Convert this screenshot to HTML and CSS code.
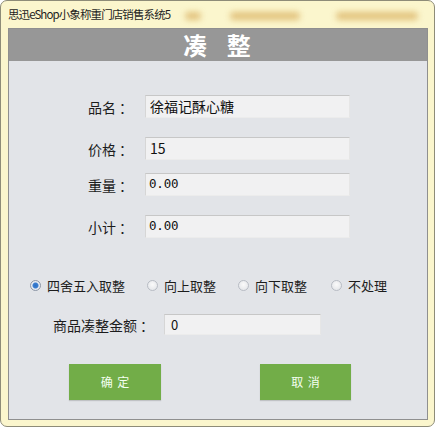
FILE: index.html
```html
<!DOCTYPE html>
<html lang="zh">
<head>
<meta charset="utf-8">
<link rel="stylesheet" href="styles.css">
</head>
<body>
<div class="window">
  <div class="titlebar">
    <span class="title">思迅eShop小象称重门店销售系统5</span>
    <span class="blob b1"></span>
    <span class="blob b2"></span>
    <span class="blob b3"></span>
  </div>
  <div class="client">
    <div class="header">凑 整</div>
    <div class="form">
      <div class="row r1"><span class="label">品名<span class="colon">：</span></span><div class="input">徐福记酥心糖</div></div>
      <div class="row r2"><span class="label">价格<span class="colon">：</span></span><div class="input">15</div></div>
      <div class="row r3"><span class="label">重量<span class="colon">：</span></span><div class="input mono">0.00</div></div>
      <div class="row r4"><span class="label">小计<span class="colon">：</span></span><div class="input mono">0.00</div></div>
    </div>
    <div class="radios">
      <label class="radio r-a"><span class="dot checked"></span>四舍五入取整</label>
      <label class="radio r-b"><span class="dot"></span>向上取整</label>
      <label class="radio r-c"><span class="dot"></span>向下取整</label>
      <label class="radio r-d"><span class="dot"></span>不处理</label>
    </div>
    <div class="amount">
      <span class="label">商品凑整金额<span class="colon">：</span></span><div class="input small">0</div>
    </div>
    <div class="buttons">
      <div class="btn ok">确 定</div>
      <div class="btn cancel">取 消</div>
    </div>
  </div>
</div>
</body>
</html>
```
FILE: styles.css
```css
html, body {
  margin: 0;
  padding: 0;
  background: #ffffff;
}
body {
  font-family: "Noto Sans CJK SC", "Noto Sans", sans-serif;
}
.window {
  width: 435px;
  height: 427px;
  box-sizing: border-box;
  border: 1px solid #8e8c78;
  border-radius: 7px;
  background: #fbf6cd;
  padding: 0 6px 6px 7px;
  display: flex;
  flex-direction: column;
}
.titlebar {
  height: 27px;
  position: relative;
  display: flex;
  align-items: center;
}
.title {
  font-size: 11.5px;
  color: #1e1e1e;
  letter-spacing: -0.9px;
  margin-top: -2px;
}
.blob {
  position: absolute;
  top: 11px;
  height: 8px;
  background: #d9b060;
  filter: blur(3px);
  opacity: 0.75;
  border-radius: 4px;
}
.b1 { left: 177px; width: 16px; }
.b2 { left: 222px; width: 70px; }
.b3 { left: 328px; width: 82px; }
.client {
  flex: 1;
  background: #e2e4e8;
  border: 1px solid #8f8f8f;
  display: flex;
  flex-direction: column;
}
.header {
  height: 32px;
  background: #979797;
  color: #ffffff;
  font-size: 24px;
  font-weight: bold;
  line-height: 32px;
  text-align: center;
  letter-spacing: 2px;
  word-spacing: 10px;
  padding-left: 0;
}
.form {
  display: flex;
  flex-direction: column;
  padding-left: 79px;
  margin-top: 34px;
}
.row {
  display: flex;
  align-items: center;
  height: 23px;
}
.r2 { margin-top: 19px; }
.r3 { margin-top: 13px; }
.r4 { margin-top: 19px; }
.label {
  font-size: 14px;
  color: #1c1c1c;
  width: 57px;
  white-space: nowrap;
}
.colon {
  margin-left: 3px;
}
.input {
  box-sizing: border-box;
  width: 205px;
  height: 23px;
  background: #f1f1f2;
  border-top: 1px solid #c7c7c7;
  border-left: 1px solid #d6d6d6;
  border-right: 1px solid #e6e6e6;
  border-bottom: 1px solid #ececec;
  font-size: 14px;
  line-height: 20px;
  padding-left: 4px;
  color: #111;
}
.mono {
  font-family: "DejaVu Sans Mono", monospace;
  font-size: 12.5px;
  letter-spacing: -0.2px;
  padding-left: 3px;
}
.radios {
  display: flex;
  align-items: center;
  margin-top: 39px;
  height: 16px;
  font-size: 13px;
  color: #1c1c1c;
  padding-left: 21px;
}
.radio {
  display: flex;
  align-items: center;
  gap: 6px;
  white-space: nowrap;
}
.r-b { margin-left: 22px; }
.r-c { margin-left: 22px; }
.r-d { margin-left: 24px; }
.dot {
  width: 9px;
  height: 9px;
  border-radius: 50%;
  border: 1px solid #b8bcc4;
  background: radial-gradient(circle at 50% 40%, #fafafa, #e0e2e6);
  display: inline-block;
}
.dot.checked {
  border-color: #8c96a6;
  background: radial-gradient(circle, #2e6fc0 0, #3a7ed2 2.5px, #e8ecf2 3.5px, #dfe3ea 100%);
}
.amount {
  display: flex;
  align-items: center;
  margin-top: 21px;
  padding-left: 44px;
}
.amount .label {
  width: 111px;
}
.input.small {
  width: 157px;
  height: 21px;
  line-height: 19px;
  font-size: 13px;
  padding-left: 6px;
}
.buttons {
  display: flex;
  margin-top: 29px;
  padding-left: 60px;
}
.btn {
  width: 92px;
  height: 36px;
  background: #72ad48;
  color: #f4fff0;
  font-size: 12px;
  line-height: 36px;
  text-align: center;
  word-spacing: 2px;
  box-shadow: 0 1px 1px rgba(0,0,0,0.15);
}
.btn.cancel {
  margin-left: 99px;
  width: 91px;
}
```
